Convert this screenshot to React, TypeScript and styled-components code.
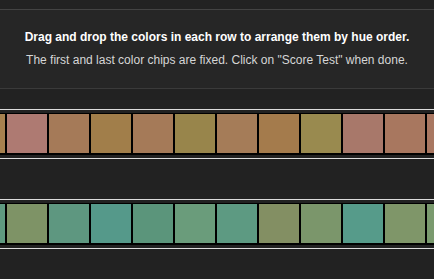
import styled, { createGlobalStyle } from "styled-components";

const GlobalStyle = createGlobalStyle`
  html, body {
    margin: 0;
    padding: 0;
    background: #222222;
  }
  body {
    font-family: "Liberation Sans", Arial, Helvetica, sans-serif;
    overflow: hidden;
  }
`;

const Page = styled.div`
  width: 434px;
  height: 279px;
  padding-top: 9px;
  box-sizing: border-box;
  background: #222222;
  overflow: hidden;
`;

const Instructions = styled.div`
  border-top: 1px solid #434343;
  border-bottom: 1px solid #3a3a3a;
  background: #262626;
  padding: 20px 0 21px;
  text-align: center;
  font-size: 12px;
  line-height: 14px;
`;

const Title = styled.div`
  color: #ffffff;
  font-weight: bold;
`;

const Subtitle = styled.div`
  color: #d6d6d6;
  margin-top: 9px;
`;

const Rows = styled.div`
  display: flex;
  flex-direction: column;
  gap: 40px;
  margin-top: 20px;
`;

const Track = styled.div`
  border-top: 1px solid #dcdcdc;
  border-bottom: 1px solid #dcdcdc;
  padding: 3px 0;
  overflow: hidden;
`;

const Strip = styled.div`
  display: flex;
  gap: 2px;
  background: #000000;
  padding: 1px 2px 2px;
  margin-left: -37px;
  width: max-content;
`;

const Chip = styled.div<{ $color: string }>`
  width: 40px;
  height: 39px;
  flex: none;
  background: ${(p) => p.$color};
`;

const rows: string[][] = [
  [
    "#a6814f",
    "#ae7a72",
    "#a57a58",
    "#a17e4a",
    "#a57a58",
    "#98854b",
    "#a57c58",
    "#a47b4c",
    "#998a4f",
    "#a8786a",
    "#a8775f",
    "#a97761",
  ],
  [
    "#5f9a80",
    "#7e9366",
    "#5e9780",
    "#55998a",
    "#5b957b",
    "#6a9c7b",
    "#5d9a82",
    "#838f63",
    "#7b966b",
    "#569b8a",
    "#7f9669",
    "#7a9a6e",
  ],
];

export default function App() {
  return (
    <Page>
      <GlobalStyle />
      <Instructions>
        <Title>Drag and drop the colors in each row to arrange them by hue order.</Title>
        <Subtitle>
          The first and last color chips are fixed. Click on "Score Test" when done.
        </Subtitle>
      </Instructions>
      <Rows>
        {rows.map((row, i) => (
          <Track key={i}>
            <Strip>
              {row.map((c, j) => (
                <Chip key={j} $color={c} />
              ))}
            </Strip>
          </Track>
        ))}
      </Rows>
    </Page>
  );
}
